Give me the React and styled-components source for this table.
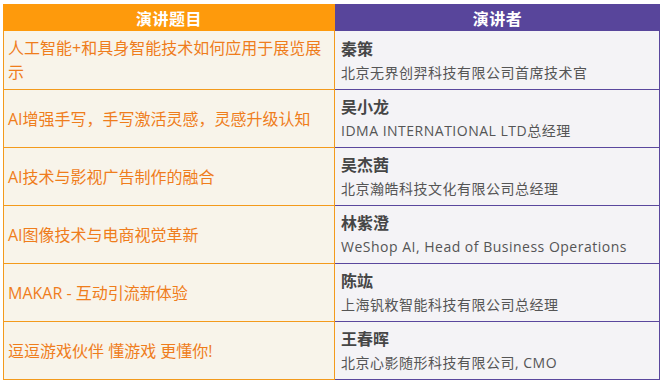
import React from "react";
import styled, { createGlobalStyle } from "styled-components";

const Global = createGlobalStyle`
  html, body { margin: 0; padding: 0; background: #ffffff; }
  body { font-family: "Open Sans", "Noto Sans CJK SC", sans-serif; }
`;

const Page = styled.div`
  padding: 4px 2px 0 3px;
`;

const Table = styled.div`
  display: grid;
  grid-template-columns: 332px 325px;
  width: 657px;
`;

const HeadCell = styled.div`
  height: 27px;
  display: flex;
  align-items: center;
  justify-content: center;
  background: ${(p) => (p.$side === "left" ? "#fe9a0c" : "#58459b")};
  color: #ffffff;
  font-weight: 700;
  font-size: 16px;
  letter-spacing: 0.5px;
`;

const TopicCell = styled.div`
  box-sizing: border-box;
  display: flex;
  align-items: center;
  background: #f8f4ea;
  border-left: 1px solid #f39a1c;
  border-right: 1px solid #f39a1c;
  border-bottom: 1px solid #f39a1c;
  padding: 5px 6px 5px 4px;
  color: #ef7d1c;
  font-size: 16px;
  line-height: 24px;
`;

const SpeakerCell = styled.div`
  box-sizing: border-box;
  display: flex;
  flex-direction: column;
  justify-content: center;
  background: #f4f3f6;
  border-right: 1px solid #5a479d;
  border-bottom: 1px solid #5a479d;
  padding: 5px 6px;
`;

const Name = styled.div`
  font-weight: 700;
  font-size: 16px;
  line-height: 24px;
  color: #464646;
`;

const Org = styled.div`
  font-size: 14px;
  line-height: 23px;
  letter-spacing: 0.5px;
  color: #555555;
`;

const rows = [
  {
    topic: "人工智能+和具身智能技术如何应用于展览展示",
    name: "秦策",
    org: "北京无界创羿科技有限公司首席技术官",
  },
  {
    topic: "AI增强手写，手写激活灵感，灵感升级认知",
    name: "吴小龙",
    org: "IDMA INTERNATIONAL LTD总经理",
  },
  {
    topic: "AI技术与影视广告制作的融合",
    name: "吴杰茜",
    org: "北京瀚皓科技文化有限公司总经理",
  },
  {
    topic: "AI图像技术与电商视觉革新",
    name: "林紫澄",
    org: "WeShop AI, Head of Business Operations",
  },
  {
    topic: "MAKAR - 互动引流新体验",
    name: "陈竑",
    org: "上海钒敉智能科技有限公司总经理",
  },
  {
    topic: "逗逗游戏伙伴 懂游戏 更懂你!",
    name: "王春晖",
    org: "北京心影随形科技有限公司, CMO",
  },
];

export default function App() {
  return (
    <Page>
      <Global />
      <Table>
        <HeadCell $side="left">演讲题目</HeadCell>
        <HeadCell $side="right">演讲者</HeadCell>
        {rows.map((r) => (
          <React.Fragment key={r.name}>
            <TopicCell>{r.topic}</TopicCell>
            <SpeakerCell>
              <Name>{r.name}</Name>
              <Org>{r.org}</Org>
            </SpeakerCell>
          </React.Fragment>
        ))}
      </Table>
    </Page>
  );
}
